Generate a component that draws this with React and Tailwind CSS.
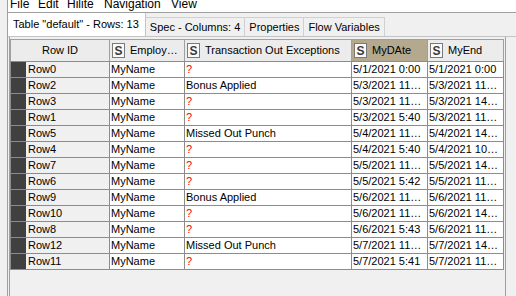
import React from 'react';

const rows = [
    ['Row0', 'MyName', '?', '5/1/2021 0:00', '5/1/2021 0:00'],
    ['Row2', 'MyName', 'Bonus Applied', '5/3/2021 11…', '5/3/2021 11…'],
    ['Row3', 'MyName', '?', '5/3/2021 11…', '5/3/2021 14…'],
    ['Row1', 'MyName', '?', '5/3/2021 5:40', '5/3/2021 11…'],
    ['Row5', 'MyName', 'Missed Out Punch', '5/4/2021 11…', '5/4/2021 14…'],
    ['Row4', 'MyName', '?', '5/4/2021 5:40', '5/4/2021 10…'],
    ['Row7', 'MyName', '?', '5/5/2021 11…', '5/5/2021 14…'],
    ['Row6', 'MyName', '?', '5/5/2021 5:42', '5/5/2021 11…'],
    ['Row9', 'MyName', 'Bonus Applied', '5/6/2021 11…', '5/6/2021 11…'],
    ['Row10', 'MyName', '?', '5/6/2021 11…', '5/6/2021 14…'],
    ['Row8', 'MyName', '?', '5/6/2021 5:43', '5/6/2021 11…'],
    ['Row12', 'MyName', 'Missed Out Punch', '5/7/2021 11…', '5/7/2021 14…'],
    ['Row11', 'MyName', '?', '5/7/2021 5:41', '5/7/2021 11…'],
];

const menus = [
    { label: 'File', w: 'w-[28px]' },
    { label: 'Edit', w: 'w-[29px]' },
    { label: 'Hilite', w: 'w-[37px]' },
    { label: 'Navigation', w: 'w-[67px]' },
    { label: 'View', w: 'w-[40px]' },
];

// little "S" type badge in the column headers
const TypeBadge = () => (
    <span className="w-[13px] h-[15px] shrink-0 bg-[#fafafa] border border-[#7a7a7a] flex items-center justify-center text-[12px] font-bold text-[#3a3a3a] leading-none">
        S
    </span>
);

const HeaderCell = ({ label, highlight }) => (
    <div className={`h-[21px] border-r border-[#a0a0a0] flex items-center gap-[5px] pl-[2px] overflow-hidden whitespace-nowrap ${highlight ? 'bg-[#b4a98f]' : 'bg-[#ececec]'}`}>
        <TypeBadge />
        <span>{label}</span>
    </div>
);

const Cell = ({ value }) => (
    <div className={`h-[15px] bg-white border-r border-[#8c8c8c] pl-[1px] flex items-center overflow-hidden whitespace-nowrap ${value === '?' ? 'text-[#ff0000]' : 'text-black'}`}>
        {value}
    </div>
);

export default function App() {
    return (
        <div className="w-[516px] h-[296px] bg-[#f0f0f0] flex overflow-hidden font-['Liberation_Sans',Arial,sans-serif] text-[11px] text-black">
            <div className="w-[7px] shrink-0" />
            <div className="flex-1 flex flex-col border-l border-[#a0a0a0]">
                {/* menu bar, cut off at the top like the window it came from */}
                <div className="h-[13px] shrink-0 bg-white border-b border-[#a0a0a0] pl-[2px] flex overflow-hidden text-[12px]">
                    {menus.map((m) => (
                        <span key={m.label} className={`${m.w} shrink-0 leading-[12px] -translate-y-[2px]`}>{m.label}</span>
                    ))}
                </div>

                {/* tabs */}
                <div className="h-[24px] shrink-0 flex border-b border-[#c4c4c4]">
                    <div className="h-full bg-white border-r border-[#c4c4c4] pl-[5px] pr-[6px] flex items-center whitespace-nowrap">
                        Table "default" - Rows: 13
                    </div>
                    {['Spec - Columns: 4', 'Properties', 'Flow Variables'].map((t) => (
                        <div key={t} className="mt-[4px] bg-[#f0f0f0] border-t border-r border-[#d0d0d0] px-[4px] flex items-center whitespace-nowrap">
                            {t}
                        </div>
                    ))}
                </div>

                {/* table area */}
                <div className="flex-1 flex pl-[1px]">
                    <div className="w-[497px] border-l border-r border-[#a0a0a0] pt-[2px]">
                        <div className="w-[494px] grid grid-cols-[100px_75px_167px_76px_76px]">
                            <div className="contents">
                                <div className="h-[22px] bg-[#ececec] border-r border-[#a0a0a0] flex items-center justify-center border-t border-t-[#a0a0a0] border-l border-l-[#a0a0a0]">Row ID</div>
                                <div className="border-t border-[#a0a0a0]"><HeaderCell label="Employ…" /></div>
                                <div className="border-t border-[#a0a0a0]"><HeaderCell label="Transaction Out Exceptions" /></div>
                                <div className="border-t border-[#a0a0a0]"><HeaderCell label="MyDAte" highlight /></div>
                                <div className="border-t border-[#a0a0a0]"><HeaderCell label="MyEnd" /></div>
                            </div>
                            <div className="col-span-5 h-[1px] bg-[#8c8c8c]" />
                            {rows.map((r) => (
                                <div key={r[0]} className="contents">
                                    <div className="h-[15px] bg-[#f0f0f0] border-l border-r border-[#8c8c8c] flex items-center">
                                        <span className="w-[15px] h-full bg-[#404040] shrink-0" />
                                        <span className="pl-[2px]">{r[0]}</span>
                                    </div>
                                    <Cell value={r[1]} />
                                    <Cell value={r[2]} />
                                    <Cell value={r[3]} />
                                    <Cell value={r[4]} />
                                    <div className="col-span-5 h-[1px] bg-[#8c8c8c]" />
                                </div>
                            ))}
                        </div>
                    </div>
                </div>
            </div>
        </div>
    );
}
